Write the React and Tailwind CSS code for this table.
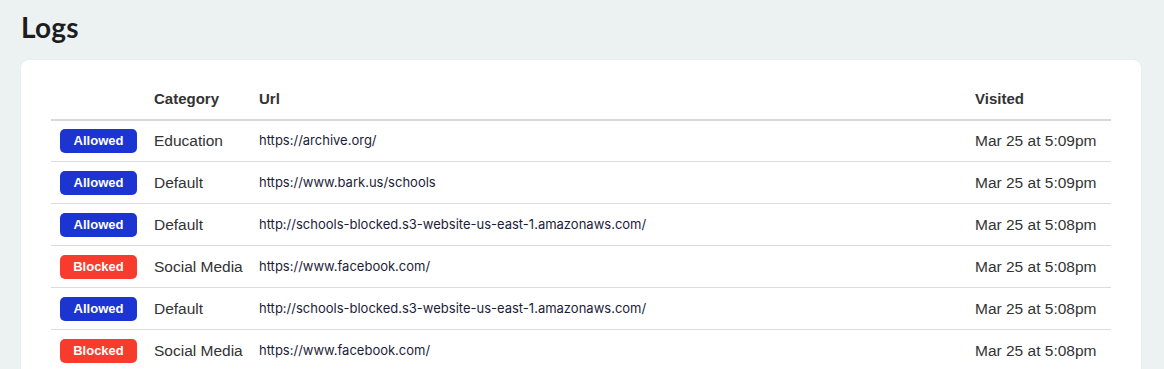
const rows = [
  { status: "Allowed", category: "Education", url: "https://archive.org/", visited: "Mar 25 at 5:09pm" },
  { status: "Allowed", category: "Default", url: "https://www.bark.us/schools", visited: "Mar 25 at 5:09pm" },
  { status: "Allowed", category: "Default", url: "http://schools-blocked.s3-website-us-east-1.amazonaws.com/", visited: "Mar 25 at 5:08pm" },
  { status: "Blocked", category: "Social Media", url: "https://www.facebook.com/", visited: "Mar 25 at 5:08pm" },
  { status: "Allowed", category: "Default", url: "http://schools-blocked.s3-website-us-east-1.amazonaws.com/", visited: "Mar 25 at 5:08pm" },
  { status: "Blocked", category: "Social Media", url: "https://www.facebook.com/", visited: "Mar 25 at 5:08pm" },
];

function Badge({ status }) {
  const blocked = status === "Blocked";
  return (
    <span
      className={
        "inline-flex items-center justify-center w-[77px] h-[24px] rounded-[5px] text-white text-[13px] font-bold " +
        (blocked ? "bg-[#f73b2c]" : "bg-[#1b34d2]")
      }
    >
      {status}
    </span>
  );
}

export default function App() {
  return (
    <div className="min-h-screen bg-[#ecf2f2] font-['Liberation_Sans',Arial,sans-serif] text-[#333]">
      <div className="px-[21px] pt-[10px]">
        <h1 className="text-[28px] font-bold text-[#1d1d1d] leading-[34px] font-['Lato',sans-serif] tracking-[0.2px]">Logs</h1>

        {/* card */}
        <div className="mt-[16px] w-[1120px] bg-white rounded-[8px] shadow-[0_0_2px_rgba(0,0,0,0.06)] px-[30px] pt-[28px] pb-[20px]">
          <table className="w-full border-collapse">
            <thead>
              <tr className="border-b-2 border-[#d8d8d8] text-left text-[15px] font-bold text-[#333]">
                <th className="w-[103px] h-[30px] pb-[8px]"></th>
                <th className="w-[105px] pb-[8px] font-bold">Category</th>
                <th className="pb-[8px] font-bold">Url</th>
                <th className="w-[136px] pb-[8px] font-bold">Visited</th>
              </tr>
            </thead>
            <tbody>
              {rows.map((r, i) => (
                <tr key={i} className="border-b border-[#dcdcdc] h-[42px]">
                  <td className="pl-[9px]">
                    <Badge status={r.status} />
                  </td>
                  <td className="text-[15.5px] text-[#333]">{r.category}</td>
                  <td className="text-[13px] text-[#1c1c38] font-['Inter',sans-serif]">{r.url}</td>
                  <td className="text-[15.5px] text-[#333]">{r.visited}</td>
                </tr>
              ))}
            </tbody>
          </table>
        </div>
      </div>
    </div>
  );
}
